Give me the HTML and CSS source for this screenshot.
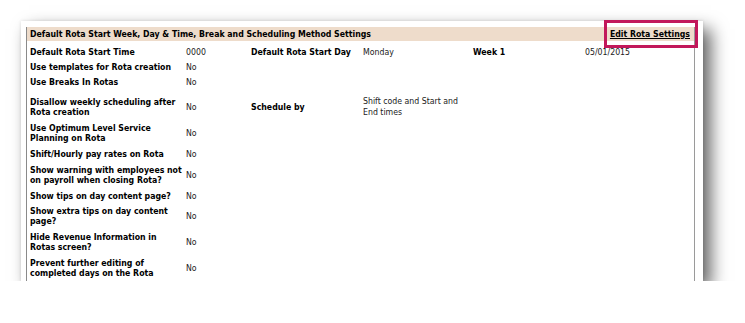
FILE: index.html
```html
<!DOCTYPE html>
<html lang="en">
<head>
  <meta charset="UTF-8">
  <title>Rota Settings</title>
  <link rel="stylesheet" href="styles.css">
</head>
<body>
  <div class="card">
    <div class="panel">
      <div class="panel-header">
        <span class="panel-title">Default Rota Start Week, Day &amp; Time, Break and Scheduling Method Settings</span>
        <a href="#" class="edit-link">Edit Rota Settings</a>
      </div>
      <table class="settings">
        <colgroup>
          <col class="c1"><col class="c2"><col class="c3"><col class="c4"><col class="c5"><col class="c6">
        </colgroup>
        <tr class="single">
          <th>Default Rota Start Time</th><td>0000</td>
          <th>Default Rota Start Day</th><td>Monday</td>
          <th>Week 1</th><td>05/01/2015</td>
        </tr>
        <tr class="single">
          <th>Use templates for Rota creation</th><td>No</td><td></td><td></td><td></td><td></td>
        </tr>
        <tr class="single">
          <th>Use Breaks In Rotas</th><td>No</td><td></td><td></td><td></td><td></td>
        </tr>
        <tr class="tall">
          <th>Disallow weekly scheduling after Rota creation</th><td>No</td>
          <th>Schedule by</th><td class="wide-lines">Shift code and Start and End times</td><td></td><td></td>
        </tr>
        <tr class="double">
          <th>Use Optimum Level Service Planning on Rota</th><td>No</td><td></td><td></td><td></td><td></td>
        </tr>
        <tr class="single-plus">
          <th>Shift/Hourly pay rates on Rota</th><td>No</td><td></td><td></td><td></td><td></td>
        </tr>
        <tr class="double">
          <th>Show warning with employees not on payroll when closing Rota?</th><td>No</td><td></td><td></td><td></td><td></td>
        </tr>
        <tr class="single">
          <th>Show tips on day content page?</th><td>No</td><td></td><td></td><td></td><td></td>
        </tr>
        <tr class="double">
          <th>Show extra tips on day content page?</th><td>No</td><td></td><td></td><td></td><td></td>
        </tr>
        <tr class="double">
          <th>Hide Revenue Information in Rotas screen?</th><td>No</td><td></td><td></td><td></td><td></td>
        </tr>
        <tr class="double">
          <th>Prevent further editing of completed days on the Rota</th><td>No</td><td></td><td></td><td></td><td></td>
        </tr>
      </table>
    </div>
    <div class="highlight"></div>
  </div>
</body>
</html>
```

FILE: styles.css
```css
body {
  margin: 0;
  background: #fff;
  font-family: "DejaVu Sans Condensed", "DejaVu Sans", sans-serif;
  font-size: 8.7px;
  color: #111;
}
.card {
  position: relative;
  margin: 21px 0 0 21px;
  width: 682px;
  height: 260px;
  box-sizing: border-box;
  padding: 6px 8px 0 5px;
  background: #fff;
  box-shadow: 8px 8px 16px rgba(0, 0, 0, 0.6), 0 0 3px rgba(0, 0, 0, 0.12);
}
.panel {
  height: 100%;
  border-left: 1px solid #8a8a8a;
  border-right: 1px solid #9a9a9a;
}
.panel-header {
  display: flex;
  justify-content: space-between;
  align-items: center;
  height: 14px;
  padding: 0 4px 0 3px;
  background: #eedccb;
  font-weight: bold;
  color: #000;
}
.edit-link {
  color: #000;
  text-decoration: underline;
}
.highlight {
  position: absolute;
  left: 583px;
  top: -1px;
  width: 88px;
  height: 22px;
  border: 3px solid #c2185b;
}
.settings {
  width: 100%;
  margin-top: 3px;
  border-collapse: collapse;
  table-layout: fixed;
}
.settings .c1 { width: 156px; }
.settings .c2 { width: 65px; }
.settings .c3 { width: 112px; }
.settings .c4 { width: 110px; }
.settings .c5 { width: 112px; }
.settings th,
.settings td {
  padding: 0 0 0 3px;
  text-align: left;
  vertical-align: middle;
  line-height: 10px;
}
.settings th {
  font-weight: bold;
  color: #000;
}
.settings td {
  color: #222;
}
.settings td.wide-lines {
  line-height: 11px;
}
.settings tr.single { height: 15px; }
.settings tr.single-plus { height: 16px; }
.settings tr.double { height: 26px; }
.settings tr.tall th,
.settings tr.tall td {
  height: 26px;
  padding-top: 5px;
}
```
